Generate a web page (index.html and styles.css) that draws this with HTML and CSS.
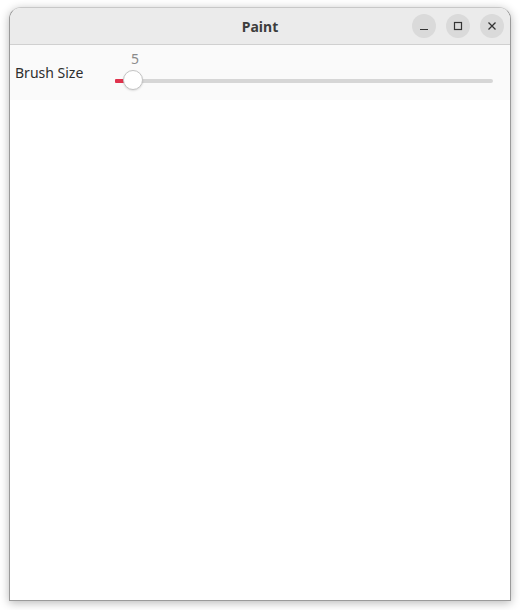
FILE: index.html
```html
<!DOCTYPE html>
<html>
<head>
<meta charset="utf-8">
<link rel="stylesheet" href="styles.css">
</head>
<body>
<div class="window">
  <div class="titlebar">
    <div class="title">Paint</div>
    <div class="controls">
      <div class="wbtn"><svg width="10" height="10" viewBox="0 0 10 10"><path d="M1 8.5h8" stroke="#333" stroke-width="1.2"/></svg></div>
      <div class="wbtn"><svg width="10" height="10" viewBox="0 0 10 10"><rect x="1.5" y="1.5" width="7" height="7" fill="none" stroke="#333" stroke-width="1.2"/></svg></div>
      <div class="wbtn"><svg width="10" height="10" viewBox="0 0 10 10"><path d="M1.5 1.5l7 7M8.5 1.5l-7 7" stroke="#333" stroke-width="1.3"/></svg></div>
    </div>
  </div>
  <div class="toolbar">
    <div class="label">Brush Size</div>
    <div class="slider">
      <div class="value">5</div>
      <div class="trough">
        <div class="fill"></div>
        <div class="knob"></div>
      </div>
    </div>
  </div>
  <div class="canvas"></div>
</div>
</body>
</html>
```
FILE: styles.css
```css
html, body {
  margin: 0;
  padding: 0;
  background: #ffffff;
  width: 520px;
  height: 610px;
  overflow: hidden;
}
body {
  padding: 7px 9px 9px 9px;
  box-sizing: border-box;
  font-family: "Noto Sans", "DejaVu Sans", sans-serif;
}
.window {
  width: 502px;
  height: 594px;
  box-sizing: border-box;
  border: 1px solid #9a9a9a;
  border-top-color: #c8c8c8;
  border-radius: 12px 12px 0 0;
  background: #ffffff;
  box-shadow: 0 2px 10px rgba(0,0,0,0.28);
  display: flex;
  flex-direction: column;
  overflow: hidden;
}
.titlebar {
  height: 36px;
  flex: none;
  background: #ebebeb;
  border-bottom: 1px solid #d0d0d0;
  display: flex;
  align-items: center;
  justify-content: center;
  position: relative;
}
.title {
  font-weight: bold;
  font-size: 14px;
  color: #3d3d3d;
}
.controls {
  position: absolute;
  right: 6px;
  top: 6px;
  display: flex;
  gap: 10px;
}
.wbtn {
  width: 24px;
  height: 24px;
  border-radius: 50%;
  background: #dadada;
  display: flex;
  align-items: center;
  justify-content: center;
}
.toolbar {
  height: 55px;
  flex: none;
  background: #fafafa;
  display: flex;
  align-items: flex-start;
  padding: 0 17px 0 5px;
}
.label {
  font-size: 14px;
  color: #2e2e2e;
  margin-top: 18px;
  width: 100px;
}
.slider {
  flex: 1;
  display: flex;
  flex-direction: column;
}
.value {
  font-size: 14px;
  color: #8a8a8a;
  margin-top: 4px;
  margin-left: 14px;
  width: 12px;
  text-align: center;
  line-height: 19px;
}
.trough {
  margin-top: 11px;
  height: 4px;
  border-radius: 2px;
  background: #d6d6d6;
  position: relative;
}
.fill {
  width: 12px;
  height: 4px;
  background: #e0334d;
  border-radius: 1px 0 0 1px;
}
.knob {
  position: absolute;
  left: 8px;
  top: -9px;
  width: 20px;
  height: 20px;
  box-sizing: border-box;
  border-radius: 50%;
  background: #ffffff;
  border: 1px solid #c4c4c4;
  box-shadow: 0 1px 2px rgba(0,0,0,0.12);
}
.canvas {
  flex: 1;
  background: #ffffff;
}
```
